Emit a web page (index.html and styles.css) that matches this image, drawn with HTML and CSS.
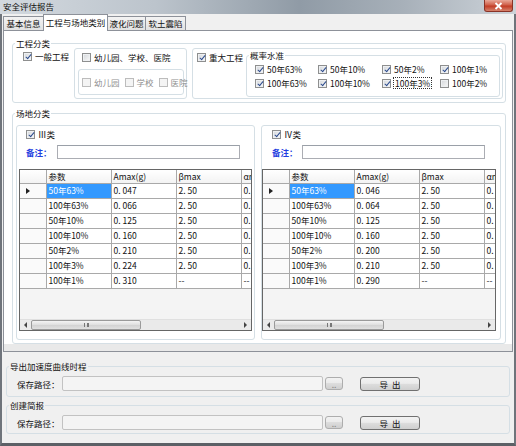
FILE: index.html
```html
<!DOCTYPE html>
<html lang="zh-CN">
<head>
    <meta charset="UTF-8">
    <title>安全评估报告</title>
    <link rel="stylesheet" href="styles.css">
</head>
<body>
<div class="window">
    <div class="titlebar">
        <span class="title">安全评估报告</span>
        <span class="close-btn">
            <svg width="9" height="8" viewBox="0 0 9 8"><path d="M1.5 1 L7.5 7 M7.5 1 L1.5 7" stroke="#fff" stroke-width="1.8"/></svg>
        </span>
    </div>
    <div class="client">
        <div class="tabstrip">
            <span class="tab t1">基本信息</span>
            <span class="tab t2 active">工程与场地类别</span>
            <span class="tab t3">液化问题</span>
            <span class="tab t4">软土震陷</span>
        </div>
        <div class="tabpage">
            <fieldset class="group group-project">
                <legend>工程分类</legend>
                <div class="project-row">
                    <label class="cb cb-general"><span class="box checked"></span>一般工程</label>
                    <div class="panel panel-school">
                        <label class="cb cb-school"><span class="box"></span>幼儿园、学校、医院</label>
                        <div class="panel panel-sub">
                            <label class="cb disabled"><span class="box"></span>幼儿园</label>
                            <label class="cb disabled"><span class="box"></span>学校</label>
                            <label class="cb disabled"><span class="box"></span>医院</label>
                        </div>
                    </div>
                    <div class="panel panel-major">
                        <label class="cb cb-major"><span class="box checked"></span>重大工程</label>
                        <fieldset class="group group-level">
                            <legend>概率水准</legend>
                            <div class="level-grid">
                                <label class="cb"><span class="box checked"></span>50年63%</label>
                                <label class="cb"><span class="box checked"></span>50年10%</label>
                                <label class="cb"><span class="box checked"></span>50年2%</label>
                                <label class="cb"><span class="box checked"></span>100年1%</label>
                                <label class="cb"><span class="box checked"></span>100年63%</label>
                                <label class="cb"><span class="box checked"></span>100年10%</label>
                                <label class="cb"><span class="box checked"></span><span class="focus">100年3%</span></label>
                                <label class="cb"><span class="box"></span>100年2%</label>
                            </div>
                        </fieldset>
                    </div>
                </div>
            </fieldset>

            <fieldset class="group group-site">
                <legend>场地分类</legend>
                <div class="site-row">
                    <div class="panel site-panel site-left">
                        <label class="cb site-cb"><span class="box checked"></span>Ⅲ类</label>
                        <div class="note-row">
                            <span class="note-label">备注：</span>
                            <span class="textbox"></span>
                        </div>
                        <div class="grid">
                            <div class="grid-body">
                                <table>
                                    <colgroup><col class="c0"><col class="c1"><col class="c2"><col class="c3"><col class="c4"></colgroup>
                                    <thead>
                                        <tr><th class="rh"></th><th>参数</th><th>Amax(g)</th><th>βmax</th><th>αmax</th></tr>
                                    </thead>
                                    <tbody>
                                        <tr><td class="rh"><span class="arrow"></span></td><td class="sel">50年63%</td><td>0. 047</td><td>2. 50</td><td>0. 118</td></tr>
                                        <tr><td class="rh"></td><td>100年63%</td><td>0. 066</td><td>2. 50</td><td>0. 165</td></tr>
                                        <tr><td class="rh"></td><td>50年10%</td><td>0. 125</td><td>2. 50</td><td>0. 313</td></tr>
                                        <tr><td class="rh"></td><td>100年10%</td><td>0. 160</td><td>2. 50</td><td>0. 400</td></tr>
                                        <tr><td class="rh"></td><td>50年2%</td><td>0. 210</td><td>2. 50</td><td>0. 525</td></tr>
                                        <tr><td class="rh"></td><td>100年3%</td><td>0. 224</td><td>2. 50</td><td>0. 560</td></tr>
                                        <tr><td class="rh"></td><td>100年1%</td><td>0. 310</td><td>--</td><td>--</td></tr>
                                    </tbody>
                                </table>
                            </div>
                            <div class="hscroll">
                                <span class="sb-btn"><span class="tri-l"></span></span>
                                <span class="thumb"><span class="grip"></span></span>
                                <span class="track"></span>
                                <span class="sb-btn"><span class="tri-r"></span></span>
                            </div>
                        </div>
                    </div>

                    <div class="panel site-panel site-right">
                        <label class="cb site-cb"><span class="box checked"></span>Ⅳ类</label>
                        <div class="note-row">
                            <span class="note-label">备注：</span>
                            <span class="textbox"></span>
                        </div>
                        <div class="grid">
                            <div class="grid-body">
                                <table>
                                    <colgroup><col class="c0"><col class="c1"><col class="c2"><col class="c3"><col class="c4"></colgroup>
                                    <thead>
                                        <tr><th class="rh"></th><th>参数</th><th>Amax(g)</th><th>βmax</th><th>αmax</th></tr>
                                    </thead>
                                    <tbody>
                                        <tr><td class="rh"><span class="arrow"></span></td><td class="sel">50年63%</td><td>0. 046</td><td>2. 50</td><td>0. 115</td></tr>
                                        <tr><td class="rh"></td><td>100年63%</td><td>0. 064</td><td>2. 50</td><td>0. 160</td></tr>
                                        <tr><td class="rh"></td><td>50年10%</td><td>0. 125</td><td>2. 50</td><td>0. 313</td></tr>
                                        <tr><td class="rh"></td><td>100年10%</td><td>0. 160</td><td>2. 50</td><td>0. 400</td></tr>
                                        <tr><td class="rh"></td><td>50年2%</td><td>0. 200</td><td>2. 50</td><td>0. 500</td></tr>
                                        <tr><td class="rh"></td><td>100年3%</td><td>0. 210</td><td>2. 50</td><td>0. 525</td></tr>
                                        <tr><td class="rh"></td><td>100年1%</td><td>0. 290</td><td>--</td><td>--</td></tr>
                                    </tbody>
                                </table>
                            </div>
                            <div class="hscroll">
                                <span class="sb-btn"><span class="tri-l"></span></span>
                                <span class="thumb"><span class="grip"></span></span>
                                <span class="track"></span>
                                <span class="sb-btn"><span class="tri-r"></span></span>
                            </div>
                        </div>
                    </div>
                </div>
            </fieldset>
        </div>

        <fieldset class="group group-export first">
            <legend>导出加速度曲线时程</legend>
            <div class="path-row">
                <span class="path-label">保存路径：</span>
                <span class="textbox path-box"></span>
                <span class="btn btn-browse">..</span>
                <span class="btn btn-export">导&nbsp;&nbsp;出</span>
            </div>
        </fieldset>
        <fieldset class="group group-export">
            <legend>创建简报</legend>
            <div class="path-row">
                <span class="path-label">保存路径：</span>
                <span class="textbox path-box"></span>
                <span class="btn btn-browse">..</span>
                <span class="btn btn-export">导&nbsp;&nbsp;出</span>
            </div>
        </fieldset>
    </div>
</div>
</body>
</html>
```

FILE: styles.css
```css
* {
    box-sizing: border-box;
}

body {
    margin: 0;
    font-family: "Noto Sans CJK SC", "Noto Sans", sans-serif;
    font-size: 8.5px;
    color: #111;
    background: #f0f0f0;
}

.window {
    width: 516px;
    height: 446px;
    display: flex;
    flex-direction: column;
    overflow: hidden;
}

/* title bar */
.titlebar {
    height: 14px;
    display: flex;
    align-items: flex-start;
    padding-left: 3px;
    background: linear-gradient(to right, #d3d9df 0%, #bcc4cc 30%, #909ba6 58%, #a7b0b9 78%, #cdd3d9 100%);
}

.title {
    line-height: 13px;
}

.close-btn {
    margin-left: auto;
    margin-right: 3px;
    width: 29px;
    height: 12px;
    display: flex;
    align-items: center;
    justify-content: center;
    border: 1px solid #8a3327;
    border-top: 0;
    border-radius: 0 0 3px 3px;
    background: linear-gradient(#e9a898, #d0604a 45%, #c23c25 55%, #d6826c);
}

.client {
    flex: 1;
    display: flex;
    flex-direction: column;
    background: #f0f0f0;
    border-left: 2px solid #6f747b;
    border-right: 2px solid #6f747b;
    border-bottom: 3px solid #5c6066;
}

/* tabs */
.tabstrip {
    height: 16px;
    display: flex;
    align-items: flex-end;
    padding-left: 1px;
}

.tab {
    height: 14px;
    line-height: 13px;
    text-align: center;
    border: 1px solid #8d9199;
    border-bottom: 0;
    background: linear-gradient(#f3f3f3, #e2e2e2);
    margin-right: -1px;
}

.t1 { width: 41px; }
.t2 { width: 65px; }
.t3 { width: 39px; }
.t4 { width: 41px; }

.tab.active {
    height: 17px;
    line-height: 15px;
    background: #fff;
    margin-bottom: -1px;
    position: relative;
    z-index: 1;
}

.tabpage {
    margin-left: 1px;
    width: 510px;
    height: 322px;
    border: 1px solid #8d9199;
    background: linear-gradient(to top, #e9e9e9 7px, #fff 7px);
}

/* group boxes */
.group {
    margin: 0;
    padding: 0;
    min-width: 0;
    border: 1px solid #d5dfe5;
    border-radius: 3px;
}

.group legend {
    padding: 0 1px;
    margin-left: 2px;
    line-height: 10px;
}

.panel {
    border: 1px solid #d5dfe5;
    border-radius: 3px;
}

.group-project {
    margin: 7px 0 0 8px;
    width: 494px;
    height: 65px;
}

.project-row {
    display: flex;
    align-items: flex-start;
}

/* checkboxes */
.cb {
    display: flex;
    align-items: center;
    gap: 3px;
    height: 10px;
    line-height: 10px;
    white-space: nowrap;
}

.box {
    position: relative;
    flex: none;
    width: 9px;
    height: 9px;
    border: 1px solid #8e8f8f;
    background: linear-gradient(135deg, #d3d6da, #f9f9f9);
    box-shadow: inset 0 0 0 1px #eef0f2;
}

.box.checked::after {
    content: "";
    position: absolute;
    left: 2.5px;
    top: 0;
    width: 2px;
    height: 5px;
    border: solid #2b4b8e;
    border-width: 0 1.5px 1.5px 0;
    transform: rotate(40deg);
}

.cb.disabled {
    color: #8f8f8f;
}

.cb.disabled .box {
    border-color: #bcbcbc;
    background: #f4f4f4;
    box-shadow: none;
}

.focus {
    outline: 1px dotted #333;
    outline-offset: 0;
    padding: 0 1px;
}

.cb-general {
    width: 61px;
    padding-left: 10px;
    margin-top: 3px;
}

.panel-school {
    width: 113px;
    height: 51px;
    padding: 3px 0 0 7px;
}

.panel-sub {
    width: 106px;
    height: 26px;
    margin: 7px 0 0 -4px;
    display: flex;
    align-items: center;
    gap: 5px;
    padding-left: 3px;
}

.panel-major {
    margin-left: 5px;
    width: 311px;
    height: 51px;
    display: flex;
    align-items: flex-start;
}

.cb-major {
    width: 53px;
    padding-left: 4px;
    margin-top: 3px;
}

.group-level {
    width: 254px;
    height: 47px;
    margin-top: 1px;
}

.level-grid {
    display: grid;
    grid-template-columns: 63px 64px 58px 50px;
    grid-auto-rows: 10px;
    row-gap: 4px;
    margin: 4px 0 0 8px;
}

/* site classes */
.group-site {
    margin: 5px 0 0 8px;
    width: 494px;
    height: 236px;
}

.site-row {
    display: flex;
    gap: 6px;
    margin: 7px 0 0 3px;
}

.site-panel {
    height: 215px;
    display: flex;
    flex-direction: column;
}

.site-left {
    width: 239px;
    padding-left: 9px;
}

.site-right {
    width: 240px;
    padding-left: 10px;
}

.site-cb {
    margin-top: 3px;
}

.note-row {
    display: flex;
    align-items: center;
    margin-top: 6px;
}

.note-label {
    width: 31px;
    color: #1f3fe0;
    font-weight: bold;
}

.site-right .note-label {
    width: 30px;
}

.textbox {
    display: block;
    width: 183px;
    height: 14px;
    border: 1px solid #abadb3;
    border-top-color: #9aa0a8;
    background: #fff;
}

/* data grid */
.grid {
    margin-top: 10px;
    height: 162px;
    display: flex;
    flex-direction: column;
    border: 1px solid #666;
    background: #f4f4f4;
    overflow: hidden;
}

.site-left .grid {
    width: 233px;
    margin-left: -7px;
}

.site-right .grid {
    width: 234px;
    margin-left: -10px;
}

.grid-body {
    flex: 1;
    overflow: hidden;
}

.grid table {
    border-collapse: collapse;
    table-layout: fixed;
    width: 291px;
}

.c0 { width: 26px; }
.c1 { width: 65px; }
.c2 { width: 65px; }
.c3 { width: 65px; }
.c4 { width: 70px; }

.grid th,
.grid td {
    border: 1px solid #a9a9a9;
    padding: 0 2px;
    text-align: left;
    font-weight: normal;
    white-space: nowrap;
    overflow: hidden;
}

.grid th {
    height: 13px;
    line-height: 11px;
    background: linear-gradient(#fff, #f3f3f3);
    border-top: 0;
}

.grid td {
    height: 15px;
    line-height: 13px;
    background: #fff;
}

.grid tr > :first-child {
    border-left: 0;
}

.grid td.rh {
    background: #fafafa;
    border-color: #dedede #a9a9a9 #dedede 0;
}

.grid td.sel {
    background: #3399ff;
    color: #fff;
}

.arrow {
    display: block;
    margin-left: 4px;
    width: 0;
    height: 0;
    border-left: 4px solid #222;
    border-top: 3px solid transparent;
    border-bottom: 3px solid transparent;
}

/* horizontal scrollbar */
.hscroll {
    height: 11px;
    display: flex;
    background: #eaeaea;
    border-top: 1px solid #e0e0e0;
}

.sb-btn {
    width: 11px;
    display: flex;
    align-items: center;
    justify-content: center;
}

.tri-l,
.tri-r {
    width: 0;
    height: 0;
    border-top: 3px solid transparent;
    border-bottom: 3px solid transparent;
}

.tri-l { border-right: 3px solid #444; }
.tri-r { border-left: 3px solid #444; }

.thumb {
    width: 110px;
    display: flex;
    align-items: center;
    justify-content: center;
    border: 1px solid #9a9a9a;
    border-radius: 2px;
    background: linear-gradient(#f4f4f4, #dedede 50%, #d2d2d2 51%, #e0e0e0);
}

.grip {
    width: 5px;
    height: 4px;
    border-left: 1px solid #777;
    border-right: 1px solid #777;
    background: linear-gradient(to right, transparent 2px, #777 2px, #777 3px, transparent 3px);
}

.track {
    flex: 1;
}

/* bottom export sections */
.group-export {
    margin: 3px 4px 0 4px;
    height: 34px;
}

.group-export.first {
    margin-top: 9px;
    height: 36px;
}

.path-row {
    display: flex;
    align-items: center;
    margin-top: 5px;
}

.path-label {
    width: 55px;
    padding-left: 10px;
}

.path-box {
    width: 261px;
    height: 15px;
    border-color: #c2c2c2;
    background: #f4f4f4;
    border-radius: 2px;
}

.btn {
    display: flex;
    align-items: center;
    justify-content: center;
    border: 1px solid #707070;
    border-radius: 3px;
    background: linear-gradient(#f2f2f2, #ebebeb 45%, #dddddd 50%, #cfcfcf);
    line-height: 10px;
}

.btn-browse {
    margin-left: 2px;
    width: 18px;
    height: 13px;
    color: #888;
    border-color: #adadad;
}

.btn-export {
    margin-left: 17px;
    width: 60px;
    height: 14px;
}
```
